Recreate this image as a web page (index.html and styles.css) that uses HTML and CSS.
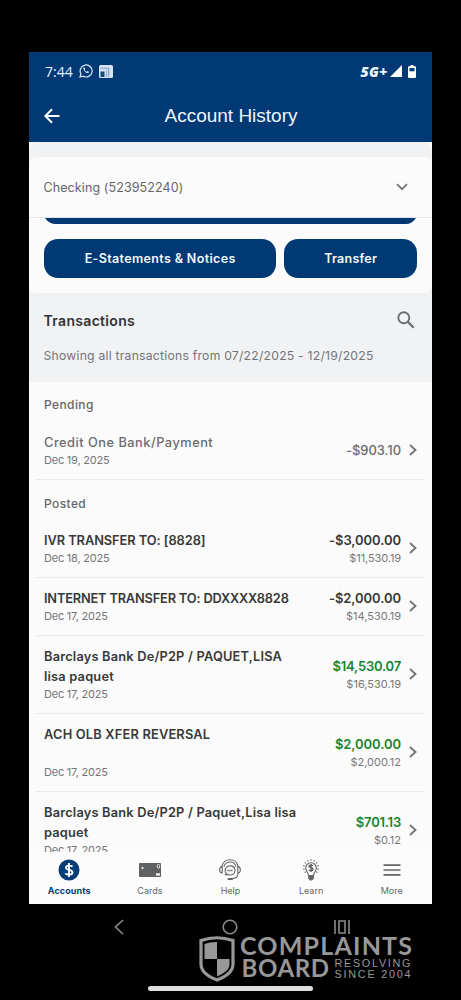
FILE: index.html
```
<!DOCTYPE html>
<html lang="en">
<head>
<meta charset="utf-8">
<title>Account History</title>
<link rel="stylesheet" href="styles.css">
</head>
<body>
<main class="app">
  <header class="top">
    <div class="status">
      <span class="time">7:44</span>
      <svg class="wa" width="14" height="14" viewBox="0 0 14 14" fill="none" stroke="#dbe9f7"><path d="M1 13l.9-3.1A6 6 0 1 1 4.200 12.200Z" stroke-width="1.2"/><path d="M4.700 3.700c-1.500 1.700 2.700 6.500 5 5.100l.3-1-1.600-.8-.8.800c-.9-.4-1.700-1.100-2-2l.7-.7-.7-1.500Z" fill="#dbe9f7" stroke="none"/></svg>
      <svg class="news" width="14" height="13" viewBox="0 0 14 13"><rect width="14" height="13" rx="1.500" fill="#d5e4f3"/><path d="M1.500 3.200h8.200v8.500" fill="none" stroke="#7196bd"/><path d="M1.500 6.500h4V12h-4z" fill="#164b83"/><path d="M7.500 5v7" stroke="#7196bd" stroke-width=".7"/></svg>
      <span class="network">5G+</span>
      <svg class="signal" width="12" height="12" viewBox="0 0 12 12"><path d="M12 0v12H0Z" fill="#fff"/></svg>
      <svg class="battery" width="8" height="13" viewBox="0 0 8 13"><path d="M2.500 0h3v1.300H7q1 0 1 1V12q0 1-1 1H1q-1 0-1-1V2.300q0-1 1-1h1.500Z" fill="#fff"/><path d="M1.500 3h5v3.300h-5Z" fill="#003974"/></svg>
    </div>
    <div class="titlebar">
      <svg width="16" height="16" viewBox="0 0 16 16" fill="none" stroke="#fff" stroke-width="2"><path d="M15.500 8H1.500M8 1.200 1.300 8 8 14.800"/></svg>
      <h1>Account History</h1>
    </div>
  </header>
  <section class="select">
    <span class="account">Checking (523952240)</span>
    <svg width="12" height="8" viewBox="0 0 12 8" fill="none" stroke="#777" stroke-width="1.900"><path d="m1 1.200 5 5 5-5"/></svg>
  </section>
  <section class="actions">
    <div class="sliver"></div>
    <div class="buttons"><button class="statements"><span>E-Statements &amp; Notices</span></button><button class="transfer"><span>Transfer</span></button></div>
  </section>
  <section class="summary">
    <div class="heading"><h2>Transactions</h2>
      <svg width="18" height="18" viewBox="0 0 18 18" fill="none" stroke="#6c6d6f" stroke-width="1.900"><circle cx="6.800" cy="6.800" r="5.500"/><path d="m10.900 10.900 5.800 5.800" stroke-width="2.200"/></svg></div>
    <p>Showing all transactions from 07/22/2025 - 12/19/2025</p>
  </section>
  <section class="list">
    <h3 class="pendlabel">Pending</h3>
    <article class="row pending"><div class="desc"><div class="name n0">Credit One Bank/Payment</div><time>Dec 19, 2025</time></div><div class="money"><b>-$903.10</b></div><svg class="chev" viewBox="0 0 8 12"><path d="m1 1 5.500 5L1 11"/></svg></article>
    <h3 class="postlabel">Posted</h3>
    <article class="row"><div class="desc"><div class="name n1">IVR TRANSFER TO: [8828]</div><time>Dec 18, 2025</time></div><div class="money"><b>-$3,000.00</b><small class="b1">$11,530.19</small></div><svg class="chev" viewBox="0 0 8 12"><path d="m1 1 5.500 5L1 11"/></svg></article>
    <article class="row"><div class="desc"><div class="name n2">INTERNET TRANSFER TO: DDXXXX8828</div><time>Dec 17, 2025</time></div><div class="money"><b>-$2,000.00</b><small>$14,530.19</small></div><svg class="chev" viewBox="0 0 8 12"><path d="m1 1 5.500 5L1 11"/></svg></article>
    <article class="row tall"><div class="desc"><div class="name n3">Barclays Bank De/P2P / PAQUET,LISA<br>lisa paquet</div><time>Dec 17, 2025</time></div><div class="money credit"><b class="a3">$14,530.07</b><small>$16,530.19</small></div><svg class="chev" viewBox="0 0 8 12"><path d="m1 1 5.500 5L1 11"/></svg></article>
    <article class="row tall"><div class="desc"><div class="name n4">ACH OLB XFER REVERSAL</div><time>Dec 17, 2025</time></div><div class="money credit"><b>$2,000.00</b><small>$2,000.12</small></div><svg class="chev" viewBox="0 0 8 12"><path d="m1 1 5.500 5L1 11"/></svg></article>
    <article class="row tall"><div class="desc"><div class="name n5">Barclays Bank De/P2P / Paquet,Lisa lisa<br>paquet</div><time>Dec 17, 2025</time></div><div class="money credit"><b class="a5">$701.13</b><small>$0.12</small></div><svg class="chev" viewBox="0 0 8 12"><path d="m1 1 5.500 5L1 11"/></svg></article>
  </section>
  <nav class="tabs">
    <a class="active"><svg width="22" height="22" viewBox="0 0 22 22"><circle cx="11" cy="11" r="10.500" fill="#063d76"/><path d="M14.500 7.700C13.500 6.400 8 5.800 8 8.700c0 2.800 6.500 1.700 6.500 4.600 0 3.200-5.900 2.600-7.200 1M11 4v14" fill="none" stroke="#fff" stroke-width="1.900"/></svg><span>Accounts</span></a>
    <a><svg width="22" height="22" viewBox="0 0 22 22"><rect y="4" width="22" height="14" rx=".8" fill="#606163"/><path d="M2 9h3M3.500 7.800v2.400" stroke="#ddd"/><rect x="18.300" y="5.500" width="2.400" height="3.700" rx="1.200" fill="none" stroke="#eee" stroke-width=".9"/><path d="M17 14.300h4v2.300h-4z" fill="#f5f5f5"/></svg><span>Cards</span></a>
    <a><svg width="24" height="22" viewBox="0 0 24 22" fill="none" stroke="#666" stroke-width="1.100"><path d="M4 8C5 1.800 8 .8 12 .8s7 1 8 7.200M6 7.500C7 4 9 3 12 3s5 1 6 4.500"/><path d="M4.200 7.500C.8 7.500.8 14 4.200 14ZM19.800 7.500c3.400 0 3.400 6.500 0 6.500ZM20 14.500c0 3.500-3 5-6.500 5"/><path d="m7.500 15.800.8-1.600C5.500 11 8 6.900 12 6.900c3.300 0 5 2.200 5 4.500 0 3.700-3.500 5.500-6.800 4Z"/><path d="M9.300 11.500h5.500" stroke-width="1.500" stroke-dasharray="1.400 .5"/><path d="M10.500 20h3.500" stroke-width="2" stroke-linecap="round"/></svg><span>Help</span></a>
    <a><svg width="18" height="22" viewBox="0 0 18 22" fill="none" stroke="#666" stroke-width="1.100"><path d="M6.500 16.500c0-3-2.800-4-2.800-7.500a5.300 5.300 0 0 1 10.600 0c0 3.500-2.800 4.500-2.800 7.500Z"/><path d="M11 7c-.8-1.200-4-1.300-4 .3 0 1.900 4 .9 4 2.900 0 1.900-3.200 1.800-4.200.6M9 5v8" stroke="#555" stroke-width="1.300"/><path d="M6.700 17.500h4.600v1.700l-1.500 1.700H8.200l-1.500-1.700Z" fill="#666"/><path d="M9 .3v1.500M5.400 1.200l.7 1.400M12.600 1.200l-.7 1.400M2.700 3.400l1.100 1M15.300 3.400l-1.100 1M1.200 6.500l1.400.5M16.800 6.500l-1.400.5M1.200 10.300l1.500-.3M16.800 10.300l-1.500-.3M2.600 13.500l1.200-.8M15.400 13.500l-1.200-.8"/></svg><span>Learn</span></a>
    <a><svg width="18" height="22" viewBox="0 0 18 22" stroke="#666" stroke-width="1.700"><path d="M.5 6.200h17M.5 11h17M.5 15.800h17"/></svg><span>More</span></a>
  </nav>
</main>
<footer class="system">
  <div class="keys">
    <svg width="10" height="16" viewBox="0 0 10 16"><path d="M9 1 1.500 8 9 15"/></svg>
    <svg width="16" height="16" viewBox="0 0 16 16"><circle cx="8" cy="8" r="6.800"/></svg>
    <svg width="16" height="14" viewBox="0 0 16 14"><path d="M1 0v14M15 0v14M5 1h6v12H5Z"/></svg>
  </div>
  <div class="brand">
    <svg class="shield" width="36" height="46" viewBox="0 0 36 46"><path d="M2 4.500Q18-1 34 4.500V28q0 10-16 16Q2 38 2 28Z" fill="#000" stroke="#989898" stroke-width="3.200"/><path d="M18 6v17H5.500V8Q11 5.800 18 6ZM18 23h12.500v6q0 6-12.500 11.500Z" fill="#989898"/></svg>
    <svg class="wordmark" width="176" height="46" viewBox="0 0 176 46" fill="#989898" font-family="Lato, sans-serif"><text x="-1" y="19" font-size="25" font-weight="700" textLength="172" lengthAdjust="spacing">COMPLAINTS</text><text x="0.500" y="41.200" font-size="24" font-weight="700" textLength="87.500" lengthAdjust="spacing">BOARD</text><g font-family="Liberation Sans, sans-serif" font-size="10.800"><text x="93.500" y="31" textLength="76" lengthAdjust="spacing">RESOLVING</text><text x="93.500" y="41.500" textLength="76" lengthAdjust="spacing">SINCE 2004</text></g></svg>
  </div>
  <div class="handle"></div>
</footer>
</body>
</html>
```
FILE: styles.css
```
* { box-sizing: border-box; }
body { margin: 0; width: 461px; height: 1000px; background: #000; padding-top: 52px; overflow: hidden; font-family: Inter, "Open Sans", sans-serif; color: #666; }
h1, h2, h3, p { margin: 0; font-weight: 400; }
svg { display: block; flex: none; }
.app { width: 403px; height: 852px; margin-left: 29px; background: #fbfbfb; display: flex; flex-direction: column; overflow: hidden; }
.top { height: 90px; flex: none; background: #003974; color: #eef6ff; }
.status { height: 38px; padding: 0 16px; display: flex; align-items: center; }
.time { font: 14px "Open Sans", sans-serif; width: 34px; }
.news { margin-left: 6px; }
.network { margin-left: auto; font: italic 800 14px "Open Sans", sans-serif; letter-spacing: .5px; }
.signal { margin-left: 2px; }
.battery { margin-left: 6px; }
.titlebar { display: grid; grid-template-columns: 16px 1fr 16px; padding: 0 14px 0 15px; align-items: center; height: 52px; }
h1 { font: 19px "Liberation Sans", Arial, sans-serif; text-align: center; }
.select { margin-top: 15px; height: 61px; flex: none; background: #fbfbfb; border-radius: 8px 8px 0 0; border-bottom: 1px solid #e3e4e5; padding: 0 24px 0 14.500px; display: flex; align-items: center; justify-content: space-between; box-shadow: 0 -15px 0 #f1f2f4; }
.account { font-size: 12.500px; letter-spacing: .1px; }
.actions { height: 75px; flex: none; padding: 0 15px; background: #fbfbfb; box-shadow: 0 8px 0 #f1f2f4; border-radius: 0 0 8px 8px; position: relative; }
.sliver { height: 6px; background: #003974; clip-path: path("M1 0H372Q368 6 362 6H12Q5 6 1 0Z"); }
.buttons { display: flex; gap: 8px; padding-top: 15px; }
button { border: 0; border-radius: 14px; height: 39px; background: #003974; color: #f3f7fd; font: 600 12.500px Inter, sans-serif; padding: 0; }
.statements { width: 233px; letter-spacing: .35px; }
.transfer { width: 133px; letter-spacing: .25px; }
.summary { height: 89px; flex: none; background: #f1f2f4; padding: 15px 17px 0 14.500px; }
.heading { display: flex; height: 24px; align-items: center; justify-content: space-between; }
h2 { font-size: 14px; font-weight: 600; letter-spacing: .32px; color: #303235; }
.summary p { font-size: 12.200px; letter-spacing: .23px; line-height: 20px; padding-top: 14px; white-space: nowrap; color: #737477; }
.list { flex: 1; min-height: 0; overflow: hidden; padding: 0 7px; }
h3 { height: 40px; line-height: 20px; padding: 13px 8px 0; font-size: 12px; font-weight: 500; letter-spacing: .4px; }
.postlabel { padding-top: 14px; }
.row { height: 58px; border-bottom: 1px solid #e9ebec; padding: 10px 8px 0; display: flex; }
.tall { height: 78px; }
.desc { flex: 1; min-width: 0; }
.name { font-size: 12.800px; line-height: 20px; height: 19px; padding-top: 1px; font-weight: 600; color: #37383a; white-space: nowrap; }
.n0 { letter-spacing: .5px; }
.n1 { letter-spacing: -.05px; }
.n2 { letter-spacing: -.17px; }
.n3, .n4, .n5 { letter-spacing: .2px; }
.tall .name { height: 39px; }
.pending .name { font-weight: 500; color: #6b6b6d; }
time { display: block; font-size: 11px; line-height: 18px; letter-spacing: -.22px; color: #747577; }
.money { display: flex; flex-direction: column; align-items: flex-end; width: 90px; flex: none; }
.money b { font-size: 13px; line-height: 20px; font-weight: 600; letter-spacing: -.06px; color: #37383a; }
.money small { font-size: 11px; line-height: 18px; margin-top: -1px; color: #77787a; }
.money .b1 { letter-spacing: -.1px; }
.money .a3, .money .a5 { letter-spacing: -.2px; }
.tall .money { padding-top: 10px; }
.pending .money b { font-weight: 500; color: #6b6b6d; padding-top: 8px; }
.money.credit b { color: #18852b; }
.chev { width: 8px; height: 12px; margin: 12px 0 0 8px; fill: none; stroke: #707173; stroke-width: 1.800; }
.tall .chev { margin-top: 22px; }
.tabs { height: 52px; flex: none; display: grid; grid-template-columns: repeat(5, 1fr); background: #fcfcfc; }
.tabs a { display: flex; flex-direction: column; align-items: center; padding-top: 7px; font-size: 9px; line-height: 14px; gap: 3px; }
.tabs .active { color: #063d76; font-weight: 700; letter-spacing: .1px; }
.system { height: 96px; }
.keys { height: 45px; display: flex; align-items: center; padding-left: 114px; fill: none; stroke: #8b8b8b; stroke-width: 1.600; }
.keys svg:nth-child(2) { margin-left: 98px; }
.keys svg:nth-child(3) { margin-left: 96px; }
.brand { display: flex; padding-left: 199px; margin-top: -10px; gap: 6px; }
.shield { margin-top: -3px; }
.wordmark { margin-top: -3px; overflow: visible; }
.handle { width: 165px; height: 5px; border-radius: 3px; background: #dedede; margin: 4px 0 0 148px; }
```
